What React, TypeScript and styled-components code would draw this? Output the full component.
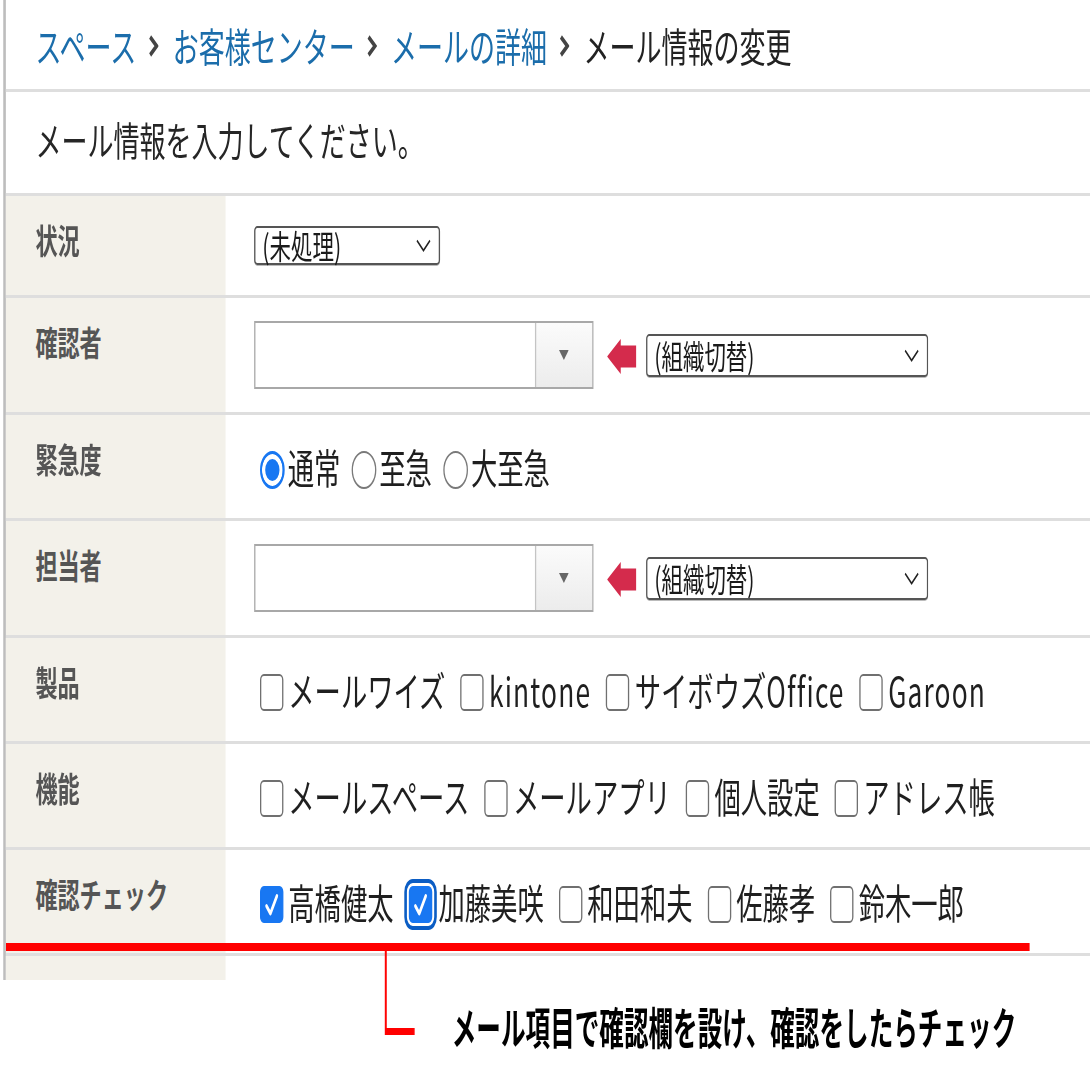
import React from 'react'
import styled, { createGlobalStyle, css } from 'styled-components'

// the reference is a horizontally squeezed screenshot, so the page is laid out
// at full width and squeezed on x as a whole
const SQUEEZE = 0.65

const GlobalStyle = createGlobalStyle`
  html, body {
    margin: 0;
    padding: 0;
    background: #fff;
    overflow: hidden;
  }
  body {
    font-family: 'Noto Sans CJK JP', 'Noto Sans', sans-serif;
    color: #222;
  }
`

const Stage = styled.div`
  width: ${1090 / SQUEEZE}px;
  height: 1090px;
  box-sizing: border-box;
  padding-left: 4.5px;
  transform: scaleX(${SQUEEZE});
  transform-origin: 0 0;
`

const Panel = styled.div`
  border-left: 4.5px solid #bdbdbd;
`

const Crumbs = styled.nav`
  display: flex;
  align-items: center;
  height: 89px;
  padding-left: 46px;
  border-bottom: 3px solid #dedede;
  font-size: 40px;
  line-height: 1;
`

const CrumbLink = styled.a`
  color: #1b6dab;
  text-decoration: none;
`

const CrumbCurrent = styled.span`
  color: #222;
`

const Sep = styled.svg`
  width: 16px;
  height: 22px;
  margin: 2px 22px 0 18px;
`

const Intro = styled.div`
  display: flex;
  align-items: center;
  height: 104px;
  box-sizing: border-box;
  padding: 0 0 7px 46px;
  border-bottom: 3px solid #dedede;
  font-size: 40px;
  color: #262626;
`

const Row = styled.div`
  position: relative;
  display: grid;
  grid-template-columns: 338px 1fr;
  min-height: 99px;
  border-bottom: 3px solid #dedede;
`

const Label = styled.div`
  background: #f3f1ea;
  padding: 22px 0 0 46px;
  font-size: 34px;
  line-height: 44px;
  font-weight: 700;
  color: #555;
`

const Value = styled.div`
  display: flex;
  align-items: center;
  padding: 23px 0 23px 44px;
  font-size: 40.5px;
  line-height: 57px;
`

const Tail = styled.div`
  display: grid;
  grid-template-columns: 338px 1fr;
  height: 24px;

  &::before {
    content: '';
    background: #f3f1ea;
  }
`

const Select = styled.div<{ $width: number; $height: number }>`
  display: flex;
  align-items: center;
  justify-content: space-between;
  box-sizing: border-box;
  width: ${({ $width }) => $width}px;
  height: ${({ $height }) => $height}px;
  padding: 0 12px 0 11px;
  border: 2px solid #555;
  border-radius: 5px;
  box-shadow: 0 1px 0 #bbb;
  background: #fff;
  font-size: 33px;
  line-height: 1;
  color: #1a1a1a;
`

const Chevron = styled.svg`
  width: 23px;
  height: 13px;
`

const Combo = styled.div`
  display: flex;
  flex-shrink: 0;
  box-sizing: border-box;
  width: 522px;
  height: 68px;
  border: 2px solid #a8a8a8;
  background: #fff;
`

const ComboInput = styled.div`
  flex: 1;
`

const ComboButton = styled.div`
  display: flex;
  align-items: center;
  justify-content: center;
  width: 86px;
  border-left: 2px solid #c4c4c4;
  background: linear-gradient(#fbfbfb, #ececec);
`

const Triangle = styled.svg`
  width: 15px;
  height: 10px;
`

const Pointer = styled.svg`
  flex-shrink: 0;
  width: 45px;
  height: 35px;
  margin: 2px 15px 0 21px;
`

const Options = styled.div<{ $gap: number }>`
  display: flex;
  align-items: center;
  gap: ${({ $gap }) => $gap}px;
`

const Option = styled.label<{ $gap: number }>`
  display: inline-flex;
  align-items: center;
  gap: ${({ $gap }) => $gap}px;
  white-space: nowrap;
  color: #1f1f1f;
`

const Latin = styled.span`
  letter-spacing: 1.8px;
`

const Radio = styled.span<{ $on?: boolean }>`
  display: inline-block;
  flex-shrink: 0;
  box-sizing: border-box;
  width: 38px;
  height: 38px;
  margin: 6px 0 0 9px;
  border-radius: 50%;
  border: 2px solid #7a7a7a;
  background: #fff;

  ${({ $on }) =>
    $on &&
    css`
      border: 3px solid #1877f2;
      background: #1877f2;
      box-shadow: inset 0 0 0 5px #fff;
    `}
`

const Box = styled.span<{ $checked?: boolean; $focused?: boolean }>`
  display: inline-flex;
  flex-shrink: 0;
  align-items: center;
  justify-content: center;
  box-sizing: border-box;
  width: 36px;
  height: 37px;
  margin: 6px 0 0 9px;
  border: 2px solid #707070;
  border-radius: 6px;
  background: #fff;

  ${({ $checked }) =>
    $checked &&
    css`
      border-color: #1877f2;
      background: #1877f2;
    `}

  ${({ $focused }) =>
    $focused &&
    css`
      outline: 4px solid #0b5dc4;
      outline-offset: 3px;
    `}
`

const Tick = styled.svg`
  width: 28px;
  height: 28px;
`

const Annotation = styled.div`
  position: absolute;
  top: 93px;
  left: 0;
  width: 1575px;
  height: 8px;
  background: #ff0000;
`

const Leader = styled.div`
  position: absolute;
  top: 8px;
  left: 583px;
  width: 46px;
  height: 84px;
  border-left: 3px solid #ff0000;
  box-sizing: border-box;

  &::after {
    content: '';
    position: absolute;
    left: -3px;
    bottom: 0;
    width: 46px;
    height: 7px;
    background: #ff0000;
  }
`

const Note = styled.div`
  position: absolute;
  top: 56px;
  left: 686px;
  font-size: 44px;
  line-height: 54px;
  font-weight: 700;
  color: #000;
  white-space: nowrap;
  transform: scaleX(0.86);
  transform-origin: 0 50%;
`

type Item = { label: string; checked?: boolean; focused?: boolean }

// latin words in the reference font run a little wider than in Noto
const withLatin = (label: string) =>
  label.split(/([A-Za-z]+)/).map((part, i) =>
    /^[A-Za-z]+$/.test(part) ? <Latin key={i}>{part}</Latin> : part
  )

const CheckGroup = ({ items }: { items: Item[] }) => (
  <Options $gap={14}>
    {items.map((item) => (
      <Option key={item.label} $gap={item.focused ? 10 : 8}>
        <Box $checked={item.checked} $focused={item.focused}>
          {item.checked && (
            <Tick viewBox="0 0 28 28">
              <path d="M6 15 L12 22.5 L22 5" fill="none" stroke="#fff" strokeWidth="3.8" strokeLinecap="round" strokeLinejoin="round" />
            </Tick>
          )}
        </Box>
        <span>{withLatin(item.label)}</span>
      </Option>
    ))}
  </Options>
)

const SelectBox = ({ text, width, height }: { text: string; width: number; height: number }) => (
  <Select $width={width} $height={height}>
    <span>{text}</span>
    <Chevron viewBox="0 0 23 13">
      <path d="M1.5 1.5 L11.5 11.5 L21.5 1.5" fill="none" stroke="#222" strokeWidth="2" />
    </Chevron>
  </Select>
)

const UserPicker = () => (
  <>
    <Combo>
      <ComboInput />
      <ComboButton>
        <Triangle viewBox="0 0 15 10">
          <polygon points="0,0 15,0 7.5,10" fill="#666" />
        </Triangle>
      </ComboButton>
    </Combo>
    <Pointer viewBox="0 0 45 35">
      <polygon points="0,17.5 21,0 21,6.5 45,6.5 45,28.5 21,28.5 21,35" fill="#d42b4c" />
    </Pointer>
    <SelectBox text="(組織切替)" width={434} height={43} />
  </>
)

const CrumbSep = () => (
  <Sep viewBox="0 0 16 22">
    <path d="M3 2 L13 11 L3 20" fill="none" stroke="#444" strokeWidth="4.5" />
  </Sep>
)

const App = () => {
  return (
    <>
      <GlobalStyle />
      <Stage>
        <Panel>
          <Crumbs>
            <CrumbLink href="#">スペース</CrumbLink>
            <CrumbSep />
            <CrumbLink href="#">お客様センター</CrumbLink>
            <CrumbSep />
            <CrumbLink href="#">メールの詳細</CrumbLink>
            <CrumbSep />
            <CrumbCurrent>メール情報の変更</CrumbCurrent>
          </Crumbs>

          <Intro>メール情報を入力してください。</Intro>

          <Row>
            <Label>状況</Label>
            <Value>
              <SelectBox text="(未処理)" width={286} height={39} />
            </Value>
          </Row>

          <Row>
            <Label>確認者</Label>
            <Value>
              <UserPicker />
            </Value>
          </Row>

          <Row>
            <Label>緊急度</Label>
            <Value>
              <Options $gap={8}>
                <Option $gap={5}>
                  <Radio $on />
                  通常
                </Option>
                <Option $gap={5}>
                  <Radio />
                  至急
                </Option>
                <Option $gap={5}>
                  <Radio />
                  大至急
                </Option>
              </Options>
            </Value>
          </Row>

          <Row>
            <Label>担当者</Label>
            <Value>
              <UserPicker />
            </Value>
          </Row>

          <Row>
            <Label>製品</Label>
            <Value>
              <CheckGroup
                items={[
                  { label: 'メールワイズ' },
                  { label: 'kintone' },
                  { label: 'サイボウズOffice' },
                  { label: 'Garoon' },
                ]}
              />
            </Value>
          </Row>

          <Row>
            <Label>機能</Label>
            <Value>
              <CheckGroup
                items={[
                  { label: 'メールスペース' },
                  { label: 'メールアプリ' },
                  { label: '個人設定' },
                  { label: 'アドレス帳' },
                ]}
              />
            </Value>
          </Row>

          <Row>
            <Label>確認チェック</Label>
            <Value>
              <CheckGroup
                items={[
                  { label: '高橋健太', checked: true },
                  { label: '加藤美咲', checked: true, focused: true },
                  { label: '和田和夫' },
                  { label: '佐藤孝' },
                  { label: '鈴木一郎' },
                ]}
              />
            </Value>
            <Annotation>
              <Leader />
              <Note>メール項目で確認欄を設け、確認をしたらチェック</Note>
            </Annotation>
          </Row>

          <Tail />
        </Panel>
      </Stage>
    </>
  )
}

export default App
